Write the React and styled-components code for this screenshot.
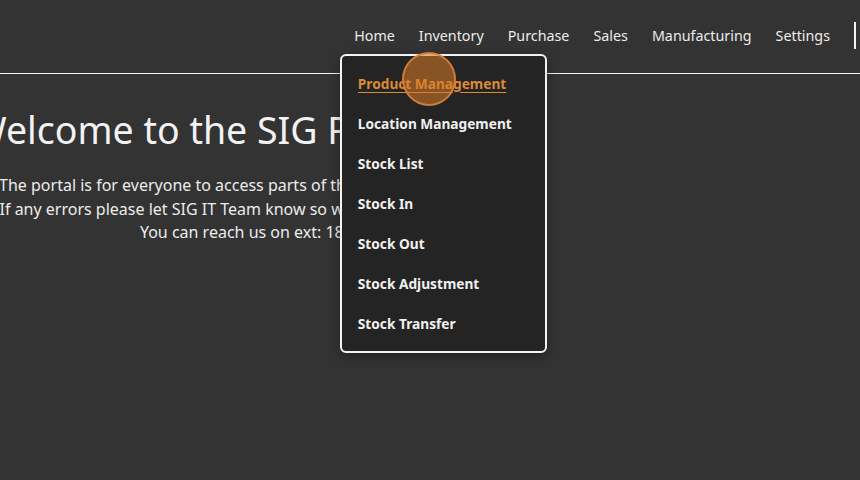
import React from "react";
import styled, { createGlobalStyle } from "styled-components";

const Global = createGlobalStyle`
  html, body { margin: 0; padding: 0; background: #333333; overflow: hidden; }
  body { font-family: "Noto Sans", "Open Sans", sans-serif; color: #f0f0f0; width: 860px; height: 480px; }
`;

const Page = styled.div`
  width: 860px;
  height: 480px;
  background: #333333;
  display: flex;
  flex-direction: column;
`;

const Header = styled.header`
  height: 74px;
  border-bottom: 1px solid #f2f2f2;
  display: flex;
  align-items: center;
  justify-content: flex-end;
  box-sizing: border-box;
  padding-bottom: 2px;
`;

const Nav = styled.nav`
  display: flex;
  align-items: center;
  gap: 24px;
`;

const NavItem = styled.div`
  position: relative;
  font-size: 14.3px;
  color: #ececec;
  cursor: pointer;
  line-height: 20px;
`;

const Divider = styled.div`
  width: 2px;
  height: 27px;
  background: #f4f4f4;
  margin-left: 24px;
  margin-right: 4px;
`;

const Dropdown = styled.div`
  position: absolute;
  top: 28px;
  left: -79px;
  width: 207px;
  height: 299px;
  box-sizing: border-box;
  background: #242424;
  border: 2px solid #f2f2f2;
  border-radius: 6px;
  padding: 8px 0 0 16px;
  display: flex;
  flex-direction: column;
  z-index: 10;
  box-shadow: 0 4px 12px rgba(0, 0, 0, 0.35);
`;

const MenuLink = styled.a`
  display: block;
  font-size: 13.7px;
  font-weight: 700;
  line-height: 40px;
  color: ${(p) => (p.$active ? "#dc8a36" : "#f0f0f0")};
  text-decoration: ${(p) => (p.$active ? "underline" : "none")};
  text-underline-offset: 3px;
  white-space: nowrap;
  position: relative;
`;

const ClickMarker = styled.span`
  position: absolute;
  left: 44px;
  top: -12px;
  width: 54px;
  height: 54px;
  border-radius: 50%;
  background: rgba(218, 124, 40, 0.55);
  border: 2px solid rgba(214, 130, 58, 0.9);
  box-sizing: border-box;
  pointer-events: none;
`;

const Main = styled.main`
  width: 502px;
  display: flex;
  flex-direction: column;
  align-items: center;
  padding-top: 31px;
`;

const Title = styled.h1`
  margin: 0;
  font-size: 37.5px;
  font-weight: 400;
  white-space: nowrap;
  color: #f2f2f2;
  line-height: 50px;
`;

const Text = styled.p`
  margin: 0;
  margin-top: ${(p) => (p.$first ? "19px" : "0")};
  font-size: 16px;
  line-height: 23.5px;
  white-space: nowrap;
  color: #ececec;
`;

const menu = [
  "Product Management",
  "Location Management",
  "Stock List",
  "Stock In",
  "Stock Out",
  "Stock Adjustment",
  "Stock Transfer",
];

export default function App() {
  return (
    <Page>
      <Global />
      <Header>
        <Nav>
          <NavItem>Home</NavItem>
          <NavItem>
            Inventory
            <Dropdown>
              {menu.map((m, i) => (
                <MenuLink key={m} $active={i === 0}>
                  {m}
                  {i === 0 && <ClickMarker />}
                </MenuLink>
              ))}
            </Dropdown>
          </NavItem>
          <NavItem>Purchase</NavItem>
          <NavItem>Sales</NavItem>
          <NavItem>Manufacturing</NavItem>
          <NavItem>Settings</NavItem>
        </Nav>
        <Divider />
      </Header>
      <Main>
        <Title>Welcome to the SIG Portal Page</Title>
        <Text $first>The portal is for everyone to access parts of the systems they need.</Text>
        <Text>If any errors please let SIG IT Team know so we can fix things soon.</Text>
        <Text>You can reach us on ext: 1800</Text>
      </Main>
    </Page>
  );
}
